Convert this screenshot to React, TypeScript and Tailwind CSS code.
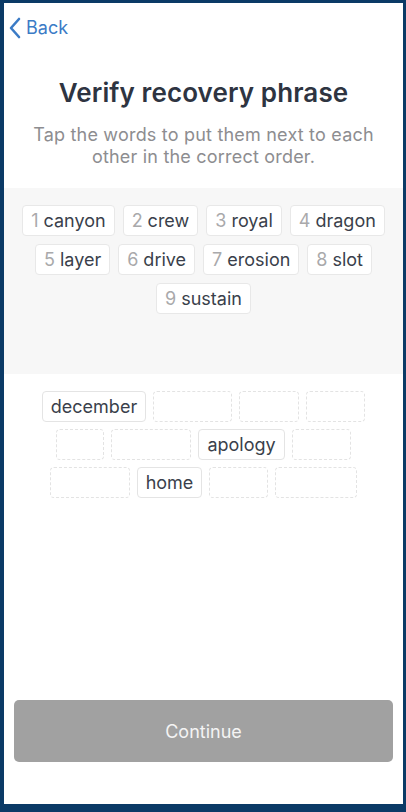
import React from 'react';

const words = ['canyon', 'crew', 'royal', 'dragon', 'layer', 'drive', 'erosion', 'slot', 'sustain'];

type Slot = { word?: string; w?: number };

const rows: Slot[][] = [
  [{ word: 'december' }, { w: 79 }, { w: 60 }, { w: 59 }],
  [{ w: 48 }, { w: 80 }, { word: 'apology' }, { w: 59 }],
  [{ w: 80 }, { word: 'home' }, { w: 59 }, { w: 82 }],
];

export default function App() {
  return (
    <div
      className="w-[406px] h-[812px] bg-[#0b3a66] pt-[3px] pl-[4px] pr-[3px] pb-[8px]"
      style={{ fontFamily: 'Inter, "Noto Sans", sans-serif' }}
    >
      <div className="h-full bg-white flex flex-col">
        {/* header */}
        <div className="h-[50px] flex items-center pl-[4px] text-[#3b7bc6]">
          <svg width="14" height="22" viewBox="0 0 14 22" fill="none">
            <path d="M11 2 L3 11 L11 20" stroke="currentColor" strokeWidth="2.6" strokeLinecap="round" strokeLinejoin="round" />
          </svg>
          <span className="ml-[4px] text-[18px] leading-none">Back</span>
        </div>

        <h1 className="mt-[25px] text-center text-[26px] leading-[30px] font-semibold text-[#2e3441] tracking-[0.1px]">
          Verify recovery phrase
        </h1>
        <p className="mt-[16px] px-[24px] text-center text-[18px] leading-[22px] tracking-[0.2px] text-[#8d8d90]">
          Tap the words to put them next to each other in the correct order.
        </p>

        {/* word bank */}
        <div className="mt-[20px] h-[186px] bg-[#f7f7f7] pt-[17px] px-[8px]">
          <div className="flex flex-wrap justify-center gap-x-[8px] gap-y-[8px]">
            {words.map((w, i) => (
              <div
                key={w}
                className="h-[31px] flex items-center px-[8px] bg-white border border-[#e8e8e8] rounded-[4px] text-[18px]"
              >
                <span className="text-[#a9a9ab]">{i + 1}</span>
                <span className="ml-[5px] text-[#3a3f4b]">{w}</span>
              </div>
            ))}
          </div>
        </div>

        {/* answer area */}
        <div className="pt-[17px] flex flex-col gap-[7px]">
          {rows.map((row, r) => (
            <div key={r} className="flex justify-center gap-[7px]">
              {row.map((s, i) =>
                s.word ? (
                  <div
                    key={i}
                    className="h-[31px] flex items-center px-[8px] bg-white border border-[#e4e4e4] rounded-[4px] text-[18px] text-[#3a3f4b]"
                  >
                    {s.word}
                  </div>
                ) : (
                  <div
                    key={i}
                    className="h-[31px] border border-dashed border-[#e3e3e3] rounded-[4px]"
                    style={{ width: s.w }}
                  />
                )
              )}
            </div>
          ))}
        </div>

        <button className="mt-auto mb-[42px] mx-[10px] h-[62px] rounded-[5px] bg-[#a1a1a1] text-[#f4f4f4] text-[18px]">
          Continue
        </button>
      </div>
    </div>
  );
}
